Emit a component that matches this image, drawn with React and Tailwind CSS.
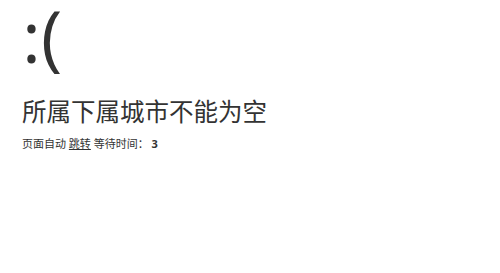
const App = () => {
    return (
        <div className="min-h-screen bg-white text-[#333] font-['Open_Sans','Noto_Sans_CJK_SC',sans-serif]">
            <div className="px-[22px]">
                <h1 className="text-[72px] font-normal leading-[70px] mb-[22px]">:(</h1>
                <div className="text-[24.5px] leading-[40px]">所属下属城市不能为空</div>
                <p className="pt-[2px] text-[11px] leading-[20px]">
                    页面自动 <a href="#" className="text-[#333] underline">跳转</a> 等待时间： <b>3</b>
                </p>
            </div>
        </div>
    );
};

export default App;
